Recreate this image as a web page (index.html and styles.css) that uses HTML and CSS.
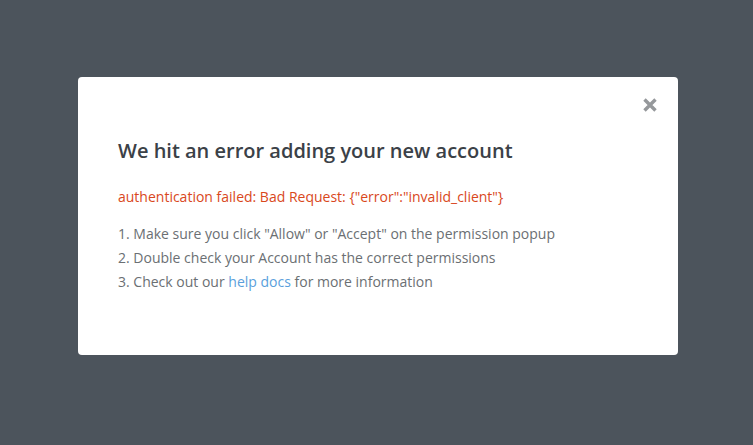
FILE: index.html
```html
<!DOCTYPE html>
<html>
<head>
<meta charset="utf-8">
<link rel="stylesheet" href="styles.css">
</head>
<body>
<div class="overlay">
  <div class="modal">
    <button class="close" aria-label="Close">
      <svg width="16" height="16" viewBox="0 0 16 16"><path d="M2.5 2.5 L13.5 13.5 M13.5 2.5 L2.5 13.5" stroke="#95989b" stroke-width="3.4" stroke-linecap="butt"/></svg>
    </button>
    <h2 class="title">We hit an error adding your new account</h2>
    <p class="error">authentication failed: Bad Request: {"error":"invalid_client"}</p>
    <ol class="steps">
      <li>1. Make sure you click "Allow" or "Accept" on the permission popup</li>
      <li>2. Double check your Account has the correct permissions</li>
      <li>3. Check out our <a href="#" class="link">help docs</a> for more information</li>
    </ol>
  </div>
</div>
</body>
</html>
```
FILE: styles.css
```css
html, body {
  margin: 0;
  padding: 0;
  height: 100%;
}
body {
  background: #4c545c;
  font-family: "Open Sans", "Liberation Sans", sans-serif;
}
.overlay {
  display: flex;
  justify-content: flex-start;
  padding: 77px 0 0 78px;
}
.modal {
  position: relative;
  width: 600px;
  height: 278px;
  box-sizing: border-box;
  background: #fff;
  border-radius: 4px;
  padding: 56px 40px 0 40px;
}
.close {
  position: absolute;
  top: 20px;
  right: 20px;
  border: 0;
  background: none;
  padding: 0;
  width: 16px;
  height: 16px;
  display: flex;
}
.title {
  margin: 0;
  font-size: 20px;
  font-weight: 600;
  line-height: 36px;
  color: #3b4147;
}
.error {
  margin: 18px 0 0 0;
  font-size: 14px;
  line-height: 20px;
  color: #d9481c;
}
.steps {
  list-style: none;
  margin: 15px 0 0 0;
  padding: 0;
  font-size: 14px;
  line-height: 24px;
  color: #6b6f73;
}
.link {
  color: #5a9fdc;
  text-decoration: none;
}
```
